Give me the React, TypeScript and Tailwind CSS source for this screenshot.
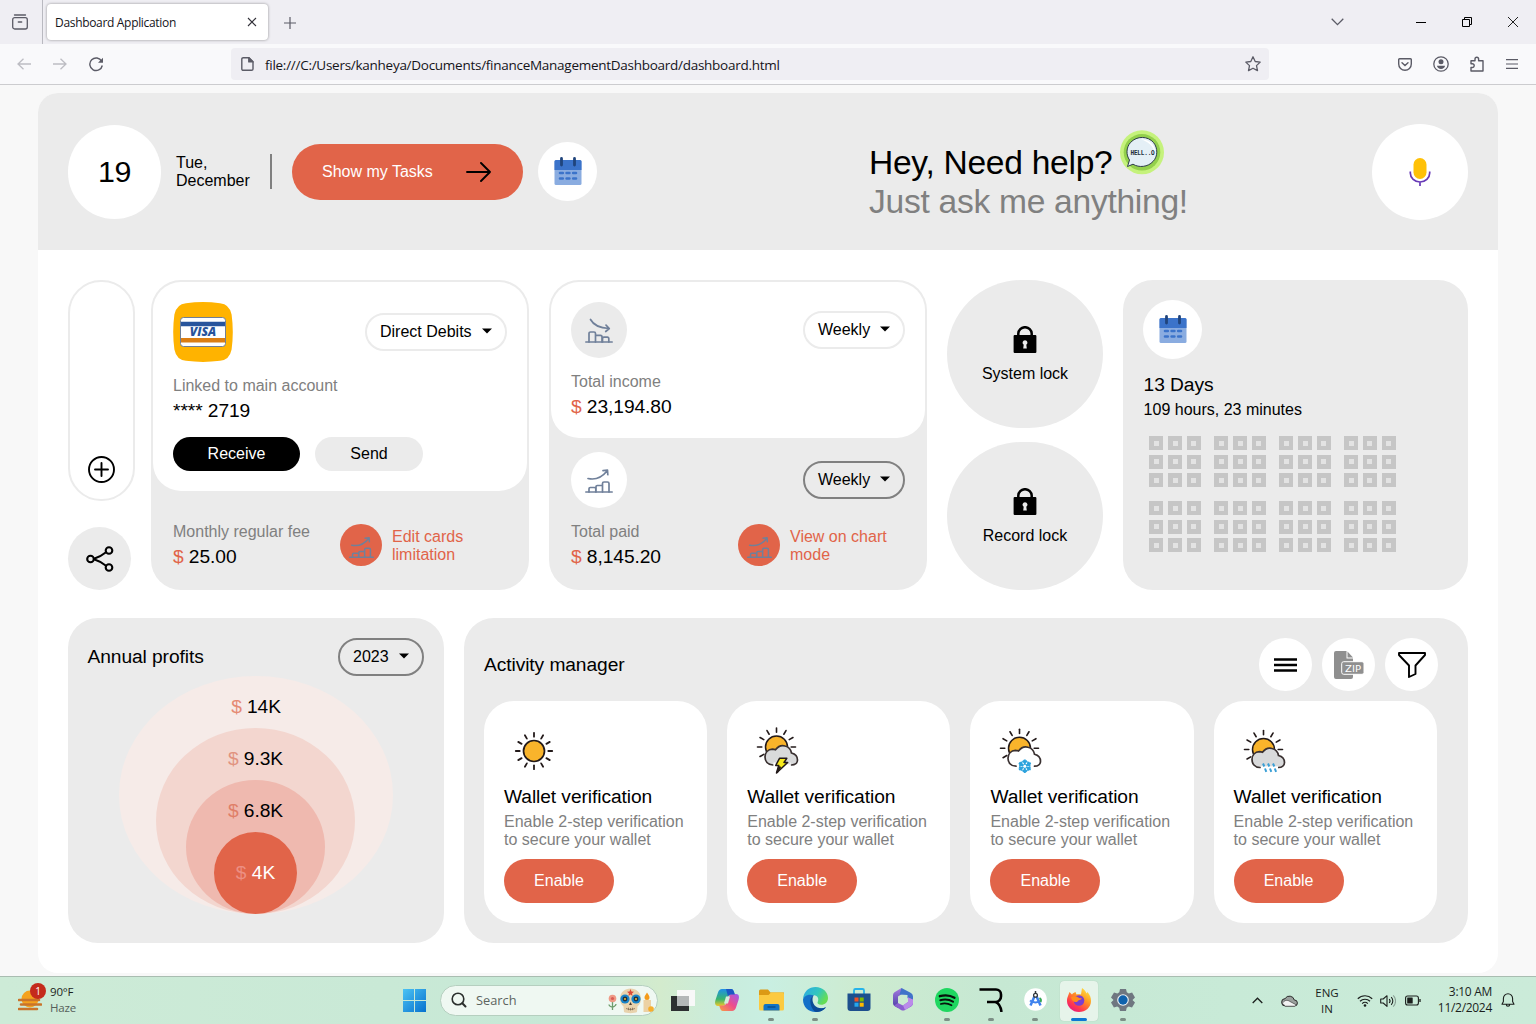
import React from "react";

const ui = "font-['Open_Sans','Noto_Sans',sans-serif]";

/* ---------- page icons ---------- */

function CalendarIcon() {
  return (
    <svg width="28" height="30" viewBox="0 0 28 30">
      <rect x="0.5" y="3" width="27" height="25" rx="1.5" fill="#8aace0" />
      <path d="M2 3h24a1.5 1.5 0 0 1 1.500 1.500V13H.5V4.500A1.500 1.500 0 0 1 2 3z" fill="#3b73ca" />
      <path d="M7.500 1.500v6.500M20.500 1.500v6.500" stroke="#20447c" strokeWidth="2.800" strokeLinecap="round" />
      <path d="M6 16h2.800M12.600 16h2.800M19.200 16H22M6 21.500h2.800M12.600 21.500h2.800M19.200 21.500H22" stroke="#3b73ca" strokeWidth="2.600" strokeLinecap="round" />
    </svg>
  );
}

function ChartIcon({ down = false, small = false }: { down?: boolean; small?: boolean }) {
  const s = small ? 25 : 28;
  return (
    <svg width={s} height={s} viewBox="0 0 28 28" fill="none" stroke="#70809a" strokeWidth="1.700" strokeLinecap="round" strokeLinejoin="round">
      <path d="M.8 26h26.400" />
      {down ? (
        <>
          <path d="M5.500 3.500c3 5.500 8.500 8.500 18.500 9M21 9.200l3.300 3.300-3.600 3" />
          <path d="M4 26V17.500a1.500 1.500 0 0 1 1.500-1.500h3.500a1.500 1.500 0 0 1 1.500 1.500V26M10.500 19.300h5a1.500 1.500 0 0 1 1.500 1.500V26M17.500 26v-3.500a1.300 1.300 0 0 1 1.300-1.300h3.700a1.300 1.300 0 0 1 1.300 1.300V26" />
        </>
      ) : (
        <>
          <path d="M3 12.500c7.500 1.700 14-1.200 19-7.500M18 4.700l4.500-.5.3 4.500" />
          <path d="M4 26v-3.200a1.300 1.300 0 0 1 1.300-1.300h4.200a1.300 1.300 0 0 1 1.300 1.300V26M11 21v-.2a1.300 1.300 0 0 1 1.300-1.300H17M11 21v5M17.500 26v-8.500a1.500 1.500 0 0 1 1.500-1.500h3.500a1.500 1.500 0 0 1 1.500 1.500V26" />
        </>
      )}
    </svg>
  );
}

function VisaIcon() {
  return (
    <svg width="60" height="60" viewBox="0 0 60 60">
      <path d="M13 1.200Q30-1 47 1.200 56.500 2 58.600 12.500 61 30 58.600 47.500 56.500 58 47 58.800 30 61 13 58.800 3.500 58 1.400 47.500-1 30 1.400 12.500 3.500 2 13 1.200z" fill="#ffb300" />
      <rect x="7.500" y="15.500" width="45" height="29" rx="3" fill="#fff" stroke="#6f7f96" strokeWidth="1" />
      <path d="M8 19.800h44v4.400H8z" fill="#27549c" />
      <path d="M8 36h44v4.400H8z" fill="#dc7e12" />
      <text x="30" y="34.300" textAnchor="middle" fontFamily="Open Sans" fontWeight="800" fontStyle="italic" fontSize="11.500" textLength="26.500" lengthAdjust="spacingAndGlyphs" fill="#27549c">VISA</text>
    </svg>
  );
}

function HelloIcon() {
  return (
    <svg width="44" height="45" viewBox="0 0 44 45">
      <circle cx="22" cy="22.300" r="22" fill="#c5f27c" />
      <circle cx="22" cy="22.300" r="18.300" fill="#93d04c" />
      <path d="M7.500 36.500l2-6.500C6 25 6 17.500 10.500 12.500 17 5.500 28 6 33.500 12.500 38 18 38 26.500 33 31.500 28 37 19 38 13 34.200z" fill="#e4eff6" stroke="#2c3b47" strokeWidth="1" />
      <path d="M21 9.200c8 0 14.500 5.500 14.200 13.500-2.500-7-7-11-14.200-13.500z" fill="#fff" />
      <text x="22.500" y="25" textAnchor="middle" fontFamily="Liberation Mono" fontWeight="700" fontSize="8" textLength="24" lengthAdjust="spacingAndGlyphs" fill="#22303c">HELL..O</text>
    </svg>
  );
}

function MicIcon() {
  return (
    <svg width="22" height="30" viewBox="0 0 22 30" fill="none">
      <rect x="4.500" y="1" width="13" height="21" rx="6.500" fill="#ffc107" />
      <path d="M1.300 14.500v1.500a9.700 9 0 0 0 19.400 0v-1.500M11 25v4" stroke="#673ab7" strokeWidth="1.700" />
    </svg>
  );
}

function LockIcon() {
  return (
    <svg width="24" height="27" viewBox="0 0 24 27">
      <path d="M5.300 11V7.500a6.700 6.300 0 0 1 13.400 0V11" fill="none" stroke="#000" strokeWidth="2.500" />
      <rect x=".6" y="9" width="22.800" height="18" rx="1" fill="#000" />
      <path d="M12 14.200a2.500 2.500 0 0 1 1.300 4.600l.5 3.700h-3.600l.5-3.700a2.500 2.500 0 0 1 1.300-4.600z" fill="#ebebeb" />
    </svg>
  );
}

const SUN_RAYS = [0, 30, 60, 90, 120, 150, 180, 210, 240, 270, 300, 330];

function SunIcon() {
  return (
    <svg width="60" height="60" viewBox="0 0 60 60">
      <circle cx="30" cy="30" r="10.500" fill="#f9b42b" stroke="#231a1a" strokeWidth="1.700" />
      {SUN_RAYS.map((a) => (
        <path key={a} d="M30 11.800v3.900" transform={`rotate(${a} 30 30)`} stroke="#231a1a" strokeWidth="1.800" strokeLinecap="round" />
      ))}
    </svg>
  );
}

function CloudSunIcon({ kind }: { kind: "storm" | "snow" | "rain" }) {
  const sunY = kind === "storm" ? 26 : kind === "snow" ? 27.200 : 28.500;
  const rays = [-120, -90, -60, -30, 0, 30, 60, 90];
  return (
    <svg width="60" height="60" viewBox="0 0 60 60" fill="none">
      <g transform={`translate(29.500 ${sunY})`}>
        <circle r="11" fill="#f9b42b" stroke="#231a1a" strokeWidth="1.500" />
        {rays.map((a) => (
          <path key={a} d="M0-19v4.300" transform={`rotate(${a})`} stroke="#231a1a" strokeWidth="1.600" strokeLinecap="round" />
        ))}
        <path d="M-3.500 18C-9 18-11.500 14-11.500 10c0-4.500 3-7.500 7.500-7.800 1 0 2 .2 3 .6C1.500-.5 5-2 8.500-1c4 1 6 4 6.500 7 4 1 6 4 6 7 0 3-2.500 5-6 5z" fill={kind === "snow" ? "#fff" : "#d9dadb"} />
        <path d="M-3.500 18C-9 18-11.500 14-11.500 10c0-4.500 3-7.500 7.500-7.800 1 0 2 .2 3 .6C1.500-.5 5-2 8.500-1c4 1 6 4 6.500 7 4 1 6 4 6 7 0 3-2.500 5-6 5" stroke="#3a3131" strokeWidth="1.700" strokeLinecap="round" />
        {kind === "storm" && (
          <>
            <path d="M-3 15.500h17v5H-3z" fill="#fff" />
            <path d="M-1 15.500h14.500v1.800H-1z" fill="#d9dadb" />
            <path d="M3 11.300h7.300l-2.800 4.200h3.700L0 26l2.200-7.500H-.8z" fill="#f7ea1d" stroke="#231a1a" strokeWidth="1.500" strokeLinejoin="round" />
            <path d="M3.800 19.500L.300 25.800" stroke="#231a1a" strokeWidth="2" />
          </>
        )}
        {kind === "snow" && (
          <g transform="translate(5.300 18)" stroke="#2ea3dd" strokeWidth="2">
            <circle r="7.500" fill="#fff" stroke="none" />
            {[0, 60, 120].map((a) => (
              <path key={a} d="M0-6.800V6.800M-2.200-5.300L0-3.600 2.200-5.300M-2.200 5.300L0 3.600 2.200 5.300" transform={`rotate(${a})`} />
            ))}
            <circle r="1.500" fill="#fff" stroke="none" />
          </g>
        )}
        {kind === "rain" && (
          <>
            <path d="M-2.500 16.800h17v4.500h-17z" fill="#fff" />
            <path d="M-.5 14l1.300 3M4.500 14l1.300 3M9.500 14l1.300 3M1.500 19l1.300 3.300M6.500 19l1.300 3.300M11.300 19l1.300 3.300" stroke="#3a9fd6" strokeWidth="2" />
          </>
        )}
      </g>
    </svg>
  );
}

function ZipIcon() {
  return (
    <svg width="32" height="30" viewBox="0 0 32 30">
      <path d="M3 1h10.500v7.500H20V27a2 2 0 0 1-2 2H3a2 2 0 0 1-2-2V3a2 2 0 0 1 2-2z" fill="#8f8f8f" />
      <path d="M14.500 1.500L20 7.500h-5.500z" fill="#8f8f8f" />
      <rect x="8.700" y="11.700" width="22.300" height="12.600" rx="2" fill="#8f8f8f" stroke="#fff" strokeWidth="1" />
      <text x="20" y="21.500" textAnchor="middle" fontFamily="DejaVu Sans" fontWeight="400" fontSize="9.500" textLength="16" lengthAdjust="spacingAndGlyphs" fill="#fff">ZIP</text>
    </svg>
  );
}

/* ---------- page building blocks ---------- */

function Select({ label, className }: { label: string; className: string }) {
  return (
    <div className={`flex h-[38px] items-center justify-between rounded-[19px] border-2 pr-[13px] pl-[13px] leading-[18px] ${className}`}>
      <span>{label}</span>
      <svg width="10" height="6" viewBox="0 0 10 6" className="-mt-0.5">
        <path d="M0 .5h10L5 5.500z" />
      </svg>
    </div>
  );
}

function Amount({ value }: { value: string }) {
  return (
    <p className="mt-[5px] text-[19.2px] leading-[22px] tracking-[-0.08px]">
      <span className="text-[#e16449]">$</span> {value}
    </p>
  );
}

function ActionLink({ lines }: { lines: string[] }) {
  return (
    <div className="mt-px flex items-center gap-2.5 text-[#e16449]">
      <div className="flex h-[42px] w-[42px] items-center justify-center rounded-full bg-[#e16449] pt-0.5">
        <ChartIcon small />
      </div>
      <p className="pt-0.5 leading-[18px]">
        {lines[0]}
        <br />
        {lines[1]}
      </p>
    </div>
  );
}

function DotBlock() {
  return (
    <div className="grid grid-cols-[repeat(3,14px)] gap-[4.7px]">
      {Array.from({ length: 9 }, (_, i) => (
        <div key={i} className="flex h-3.5 items-center justify-center bg-[#c6c6c6]">
          <div className="h-[5px] w-[5px] bg-[#e3e3e3]" />
        </div>
      ))}
    </div>
  );
}

function Lock({ label }: { label: string }) {
  return (
    <div className="flex h-[148px] flex-col items-center rounded-[74px] bg-[#ebebeb] pt-[46px]">
      <LockIcon />
      <p className="mt-3 leading-[18px]">{label}</p>
    </div>
  );
}

function RoundButton({ children }: { children: React.ReactNode }) {
  return <div className="flex h-[53px] w-[53px] items-center justify-center rounded-full bg-white">{children}</div>;
}

function WalletCard({ icon }: { icon: React.ReactNode }) {
  return (
    <div className="h-[222px] flex-1 rounded-[30px] bg-white px-5 pt-5">
      {icon}
      <h3 className="mt-[5px] text-[19.2px] leading-[22px] tracking-[-0.08px]">Wallet verification</h3>
      <p className="mt-[5px] leading-[18px] whitespace-nowrap text-[#808080]">
        Enable 2-step verification
        <br />
        to secure your wallet
      </p>
      <button className="mt-2.5 block h-11 w-[110px] rounded-[22px] bg-[#e16449] text-white">Enable</button>
    </div>
  );
}

/* ---------- browser chrome ---------- */

function BrowserChrome() {
  return (
    <div className={ui}>
      <div className="flex h-11 items-center bg-[#efeef3]">
        <div className="flex h-11 w-[43px] items-center border-r border-[#b9b9c0] pl-3">
          <svg width="16" height="16" viewBox="0 0 16 16" fill="none" stroke="#5b5b66" strokeWidth="1.300" strokeLinecap="round">
            <path d="M2.500 1h11" />
            <rect x=".7" y="3.700" width="14.600" height="11.300" rx="2" />
            <path d="M6.300 8h3.400" />
          </svg>
        </div>
        <div className="ml-[4px] flex h-9 w-[221px] items-center justify-between rounded bg-white pr-[11px] pl-2 shadow-[0_0_3px_rgba(0,0,0,0.4)]">
          <span className="pt-0.5 text-[12px] tracking-[-0.32px] text-[#15141a]">Dashboard Application</span>
          <svg width="10" height="10" viewBox="0 0 10 10" stroke="#33323a" strokeWidth="1.100">
            <path d="M1 1l8 8M9 1L1 9" />
          </svg>
        </div>
        <svg className="mt-0.5 ml-4" width="12" height="12" viewBox="0 0 12 12" stroke="#5b5b66" strokeWidth="1.200">
          <path d="M6 0v12M0 6h12" />
        </svg>
        <svg className="ml-auto" width="13" height="8" viewBox="0 0 13 8" fill="none" stroke="#5b5b66" strokeWidth="1.300">
          <path d="M.7.800l5.800 5.800L12.300.800" />
        </svg>
        <div className="ml-[72px] h-px w-2.5 bg-black" />
        <svg className="ml-9" width="10" height="10" viewBox="0 0 10 10" fill="none" stroke="#000">
          <path d="M.5 2.500h7v7h-7zM2.500 2.500v-2h7v7h-2" />
        </svg>
        <svg className="mr-[18px] ml-9" width="10" height="10" viewBox="0 0 10 10" stroke="#222" strokeWidth="1">
          <path d="M0 0l10 10M10 0L0 10" />
        </svg>
      </div>
      <div className="flex h-[41px] items-center border-b border-[#cccccf] bg-[#f9f9fb]">
        <svg className="ml-[17px]" width="14" height="12" viewBox="0 0 14 12" fill="none" stroke="#bdbdc3" strokeWidth="1.300">
          <path d="M14 6H1M6.500.7L1 6l5.500 5.300" />
        </svg>
        <svg className="ml-[22px]" width="14" height="12" viewBox="0 0 14 12" fill="none" stroke="#bdbdc3" strokeWidth="1.300">
          <path d="M0 6h13M7.500.7L13 6l-5.500 5.300" />
        </svg>
        <svg className="ml-[22px]" width="15" height="15" viewBox="0 0 15 15" fill="none" stroke="#5b5b66" strokeWidth="1.400">
          <path d="M12.700 4.300A6.300 6.300 0 1 0 13.300 8.500" />
          <path d="M14 .8v5H9z" fill="#5b5b66" stroke="none" />
        </svg>
        <div className="ml-[127px] flex h-8 w-[1038px] items-center rounded bg-[#efeef3] pr-2 pl-2.5">
          <svg width="13" height="14" viewBox="0 0 13 14" fill="none" stroke="#5b5b66" strokeWidth="1.400" strokeLinejoin="round">
            <path d="M2.200.7h5.800l4 4v7.200a1.400 1.400 0 0 1-1.400 1.400H2.200A1.400 1.400 0 0 1 .8 11.900V2.100A1.400 1.400 0 0 1 2.200.7z" />
            <path d="M7.800.7v4.200h4.200z" fill="#5b5b66" />
          </svg>
          <span className="ml-[11px] pt-0.5 text-[13.5px] tracking-[-0.27px] whitespace-nowrap text-[#15141a]">
            file:///C:/Users/kanheya/Documents/financeManagementDashboard/dashboard.html
          </span>
          <svg className="ml-auto" width="16" height="16" viewBox="0 0 16 16" fill="none" stroke="#5b5b66" strokeWidth="1.300" strokeLinejoin="round">
            <path d="M8 .8l2.200 4.700 5 .6-3.700 3.500 1 5L8 12.200l-4.500 2.400 1-5L.8 6.100l5-.6z" />
          </svg>
        </div>
        <div className="mr-[18px] ml-auto flex items-center gap-[21px]">
          <svg width="14" height="13" viewBox="0 0 14 13" fill="none" stroke="#5b5b66" strokeWidth="1.400" strokeLinecap="round">
            <path d="M1.500.7h11a.8.800 0 0 1 .8.800V6A6.300 6.300 0 0 1 .7 6V1.500a.8.800 0 0 1 .8-.8zM4 4.700l3 2.800 3-2.800" />
          </svg>
          <svg width="16" height="16" viewBox="0 0 16 16">
            <circle cx="8" cy="8" r="7.200" fill="none" stroke="#5b5b66" strokeWidth="1.300" />
            <circle cx="8" cy="5.800" r="2.500" fill="#5b5b66" />
            <path d="M4 9.800h8c0 2-2 3.200-4 3.200s-4-1.200-4-3.200z" fill="#5b5b66" />
          </svg>
          <svg width="15" height="16" viewBox="0 0 15 16" fill="none" stroke="#5b5b66" strokeWidth="1.400" strokeLinejoin="round">
            <path d="M1 15v-3.500h1.300a1.900 1.900 0 1 0 0-3.800H1V4.800h4V3a1.800 1.800 0 0 1 3.600 0v1.800H13V15z" />
          </svg>
          <svg width="12" height="10" viewBox="0 0 12 10" stroke="#5b5b66" strokeWidth="1.200">
            <path d="M0 .7h12M0 5h12M0 9.300h12" />
          </svg>
        </div>
      </div>
    </div>
  );
}

/* ---------- taskbar ---------- */

function TaskSlot({ children, running = false, active = false }: { children: React.ReactNode; running?: boolean; active?: boolean }) {
  return (
    <div className="flex w-11 justify-center">
      <div className={`flex h-10 w-[38px] flex-col items-center justify-between rounded pt-[7px] ${active ? "bg-[#e6f4ea] shadow-[0_0_1px_rgba(0,0,0,0.2)]" : ""}`}>
        <div className="flex h-6 items-center">{children}</div>
        <div className={`h-[3px] rounded-full ${active ? "w-4 bg-[#0b78d4]" : running ? "w-1.5 bg-[#7d8f86]" : "w-1.5"}`} />
      </div>
    </div>
  );
}

function Taskbar() {
  return (
    <div className={`${ui} flex h-12 items-center border-t border-[#a9bdb1] bg-[linear-gradient(90deg,#cdebd7_0%,#c9e9d6_25%,#c6e8d6_38%,#d3ebcd_43%,#c9ecdc_47%,#c9efe2_50%,#cdebd0_56%,#c6e8d3_65%,#c8ead7_80%,#cbebd9_100%)] text-[#1b1f1d]`}>
      <div className="relative ml-[18px] flex w-[370px] items-center">
        <svg width="24" height="22" viewBox="0 0 24 22">
          <circle cx="12" cy="9" r="8.500" fill="#f4a21e" />
          <path d="M1 10h20M3 14.500h20M1 19h18" stroke="#c9742a" strokeWidth="2.600" strokeLinecap="round" />
        </svg>
        <div className="absolute top-[-3px] left-[12px] flex h-4 w-4 items-center justify-center rounded-full bg-[#c42b1c] text-[10px] leading-none text-white">1</div>
        <div className="-mt-0.5 ml-2 text-[11.5px] leading-4 tracking-[-0.2px]">
          <p>90°F</p>
          <p className="text-[#55605a]">Haze</p>
        </div>
      </div>
      <div className="ml-[15px]">
        <svg width="23" height="23" viewBox="0 0 23 23">
          <defs>
            <linearGradient id="win" x1="0" y1="0" x2="1" y2="1">
              <stop offset="0" stopColor="#4cc3f4" />
              <stop offset="1" stopColor="#0671ce" />
            </linearGradient>
          </defs>
          <path d="M0 0h11v11H0zM12 0h11v11H12zM0 12h11v11H0zM12 12h11v11H12z" fill="url(#win)" />
        </svg>
      </div>
      <div className="ml-3.5 flex h-[31px] w-[218px] items-center rounded-full border border-[#b5cfbf] bg-[#eff8f2] pl-2.5">
        <svg className="-mt-0.5" width="16" height="16" viewBox="0 0 16 16" fill="none" stroke="#2b2f2d" strokeWidth="1.600" strokeLinecap="round">
          <circle cx="7" cy="7" r="5.800" />
          <path d="M11.300 11.300L14.500 14.500" strokeWidth="2" />
        </svg>
        <span className="ml-[9px] pt-px text-[12.8px] text-[#5c6460]">Search</span>
        <svg className="mr-[3px] ml-auto" width="46" height="26" viewBox="0 0 46 26">
          <path d="M4.500 13v9M1 16.500c0 2 3 2.500 3.500 2.500S8 18 8 16" stroke="#6c9c6c" strokeWidth="1.300" fill="none" />
          <circle cx="4.500" cy="10.500" r="3.800" fill="#ef9a86" />
          <circle cx="4.500" cy="10.500" r="1.600" fill="#d95d55" />
          <path d="M12 11C12 4 17 .5 22.500.5S33 4 33 11c0 4-2 6-3.500 7.500L29 24c-2 1.500-11 1.500-13 0l-.5-5.500C14 17 12 15 12 11z" fill="#e8d3ad" />
          <circle cx="17" cy="11" r="4.600" fill="#1785c9" />
          <circle cx="28" cy="11" r="4.600" fill="#1785c9" />
          <circle cx="17" cy="11" r="2.400" fill="#25303b" />
          <circle cx="28" cy="11" r="2.400" fill="#25303b" />
          <circle cx="17" cy="11" r="1" fill="#f2c230" />
          <circle cx="28" cy="11" r="1" fill="#f2c230" />
          <path d="M22.500 1l1 2.500 2.500.2-2 1.700.6 2.600-2.100-1.400L20.400 8l.6-2.600-2-1.700 2.500-.2z" fill="#dc4a38" />
          <path d="M22.500 14l1.500 3h-3z" fill="#4a3b31" />
          <path d="M18 20.500c3 1.300 6 1.300 9 0M20.500 19.700v2.500M22.500 20v2.500M24.500 19.700v2.500" stroke="#7a634b" fill="none" strokeWidth=".7" />
          <path d="M35.500 12h7.500v12h-7.500z" fill="#ecd1a4" />
          <path d="M39 4.500c1.800 2.500 2.500 3.500 2.500 5a2.500 2.500 0 0 1-5 0c0-1.500 1.300-3 2.500-5z" fill="#f49b1b" />
          <circle cx="43" cy="21" r="2.800" fill="#f6ae2c" />
        </svg>
      </div>
      <div className="ml-[3px] flex">
        <TaskSlot>
          <svg width="24" height="24" viewBox="0 0 24 24">
            <path d="M6 2h18v16H6z" fill="#f8f8f8" />
            <path d="M0 8h18v15H0z" fill="#2d2f31" />
            <path d="M6 8h12v10H6z" fill="#b4b7b8" />
          </svg>
        </TaskSlot>
        <TaskSlot>
          <svg width="24" height="22" viewBox="0 0 24 22">
            <defs>
              <linearGradient id="cp1" x1="0" y1="0" x2="0" y2="1">
                <stop offset="0" stopColor="#1f8fe8" />
                <stop offset=".6" stopColor="#38b56d" />
                <stop offset="1" stopColor="#f0c72a" />
              </linearGradient>
              <linearGradient id="cp2" x1="1" y1="0" x2="0" y2="1">
                <stop offset="0" stopColor="#9a5cf0" />
                <stop offset=".5" stopColor="#ee4d8b" />
                <stop offset="1" stopColor="#f9a03f" />
              </linearGradient>
            </defs>
            <path d="M7 0h9c2 0 2.500 1.500 3 3l.8 2.500H16c-2 0-3 1-3.500 3L10.500 14c-.7 2.300-1.500 3-3.500 3H3c-3 0-3.500-2.500-2.500-6L3 3.500C3.700 1.300 5 0 7 0z" fill="url(#cp1)" />
            <path d="M17 22H8c-2 0-2.500-1.500-3-3l-.8-2.500H8c2 0 3-1 3.500-3L13.500 8c.7-2.300 1.500-3 3.500-3h4c3 0 3.500 2.500 2.500 6L21 18.500c-.7 2.200-2 3.500-4 3.500z" fill="url(#cp2)" />
            <path d="M11 7.500h4L13 14.500H9z" fill="#d4edda" />
            <path d="M11 0h5c2 0 2.500 1.500 3 3l.8 2.500H16c-1.500 0-2.500.7-3 2z" fill="#1c57c4" />
          </svg>
        </TaskSlot>
        <TaskSlot running>
          <svg width="25" height="22" viewBox="0 0 25 22">
            <path d="M0 2A1.500 1.500 0 0 1 1.500.5H9l2.500 3H25V10H0z" fill="#dc9a15" />
            <path d="M0 6h9.500l2.500-2.500h11.500A1.500 1.500 0 0 1 25 5v15a1.500 1.500 0 0 1-1.500 1.500h-22A1.500 1.500 0 0 1 0 20z" fill="#fcca40" />
            <path d="M4.500 21.500V17A2 2 0 0 1 6.500 15h12a2 2 0 0 1 2 2v4.500z" fill="#1273c5" />
            <path d="M8.500 18h8" stroke="#0a4d8c" strokeWidth="1.400" />
          </svg>
        </TaskSlot>
        <TaskSlot running>
          <svg width="25" height="25" viewBox="0 0 24 24">
            <defs>
              <linearGradient id="ed1" x1="0" y1="0" x2="1" y2=".5">
                <stop offset="0" stopColor="#2aa7e8" />
                <stop offset=".6" stopColor="#32c6bd" />
                <stop offset="1" stopColor="#66dd55" />
              </linearGradient>
            </defs>
            <path d="M0 12C.5 4 6 0 12 0c7 0 12 5 12 10.500 0 4-3 6.500-6.500 6.500-3 0-4-1.300-3.500-2.300C15 13 15.500 9 11 8 6 7 1 9 0 12z" fill="url(#ed1)" />
            <path d="M0 12C1 8 6 6.300 10.500 8 7 10 7 15 10 18c3 3.200 8 3.500 12 1.500C19 23 16 24 12 24 5 24 0 19 0 12z" fill="#1370c8" />
            <path d="M10.500 8C6 9.500 5.500 18 11.500 23.800 17 24.500 21 21.500 22 19.500c-4 1.700-8.500 1-11-2C8.500 14 8.700 10 10.500 8z" fill="#0b4a96" />
          </svg>
        </TaskSlot>
        <TaskSlot>
          <svg width="24" height="24" viewBox="0 0 24 24">
            <path d="M7 6V2.500A1.500 1.500 0 0 1 8.500 1h7A1.500 1.500 0 0 1 17 2.500V6" fill="none" stroke="#25b3ea" strokeWidth="1.800" />
            <path d="M.5 5.500h23V20a3 3 0 0 1-3 3h-17a3 3 0 0 1-3-3z" fill="#1d4f8d" />
            <path d="M7.500 9.500h4v4h-4z" fill="#f25022" />
            <path d="M12.700 9.500h4v4h-4z" fill="#7fba00" />
            <path d="M7.500 14.700h4v4h-4z" fill="#25a6ee" />
            <path d="M12.700 14.700h4v4h-4z" fill="#ffb900" />
          </svg>
        </TaskSlot>
        <TaskSlot>
          <svg width="22" height="23" viewBox="0 0 22 23">
            <defs>
              <linearGradient id="m1" x1="0" y1="0" x2="0" y2="1">
                <stop offset="0" stopColor="#a67be0" />
                <stop offset="1" stopColor="#4a3fa5" />
              </linearGradient>
            </defs>
            <path d="M9.500 0L2.500 4.200A3.500 3.500 0 0 0 1 7v8.500A3.500 3.500 0 0 0 2.500 18L6 20V8.500L13 4z" fill="url(#m1)" />
            <path d="M9.500 0L19 5a4 4 0 0 1 2 3.500V14l-5.500-4V7L7.500 6.500z" fill="#4173c9" />
            <path d="M2 17.500L6 15l5 2.500L16 14V9l5 3v3.500a3.500 3.500 0 0 1-1.500 2.800L13 22a4 4 0 0 1-4 0z" fill="#8b5fd0" />
            <path d="M11 17.500L16 14V9.500l5 2V15a3.500 3.500 0 0 1-1.500 2.800L13 22z" fill="#bb8bea" />
          </svg>
        </TaskSlot>
        <TaskSlot running>
          <svg width="24" height="24" viewBox="0 0 24 24" fill="none" stroke="#08120c" strokeLinecap="round">
            <circle cx="12" cy="12" r="12" fill="#1fd760" stroke="none" />
            <path d="M4.800 8.200c5-1.400 10.500-.9 14.700 1.500" strokeWidth="2.300" />
            <path d="M5.300 12.300c4.300-1.200 9-.7 12.700 1.400" strokeWidth="2" />
            <path d="M5.800 16c3.700-1 7.500-.5 10.700 1.300" strokeWidth="1.700" />
          </svg>
        </TaskSlot>
        <TaskSlot running>
          <svg width="24" height="24" viewBox="0 0 24 24" fill="none" stroke="#000" strokeWidth="2.600" strokeLinejoin="round">
            <path d="M.5 1.500h16.500a5 5 0 0 1 5 5v2a5.500 5.500 0 0 1-5.500 5.500H8M16.500 14c3 1 5 3 6 10" />
          </svg>
        </TaskSlot>
        <TaskSlot running>
          <svg width="23" height="23" viewBox="0 0 23 23">
            <circle cx="11.500" cy="11.500" r="11.300" fill="#fff" />
            <path d="M11.500 6L6.500 17.500M11.500 6l5 11.500" stroke="#3f82ee" strokeWidth="2.500" fill="none" />
            <path d="M6 12.500c3 2.500 8 2.500 11 0" stroke="#3f82ee" strokeWidth="2" fill="none" />
            <path d="M15.500 10a3 3 0 0 1 1 4" stroke="#35a853" strokeWidth="1.800" fill="none" />
            <circle cx="11.500" cy="7.300" r="1.900" fill="#fff" stroke="#33383c" strokeWidth="1.300" />
            <path d="M11.500 3v2.500" stroke="#33383c" strokeWidth="1.500" />
          </svg>
        </TaskSlot>
        <TaskSlot active>
          <svg width="24" height="24" viewBox="0 0 24 24">
            <defs>
              <linearGradient id="ff" x1=".9" y1="0" x2=".2" y2="1">
                <stop offset="0" stopColor="#fff04a" />
                <stop offset=".4" stopColor="#ff9a20" />
                <stop offset=".75" stopColor="#ff3a4d" />
                <stop offset="1" stopColor="#e31587" />
              </linearGradient>
            </defs>
            <path d="M1 8l1.500-4L5 6.500C6 5 7 4.500 8.500 4l1 2.500c2-.5 3-.5 4.500 0L15 0c3 2 4 4 4.500 5.500L20.500 4C23 7 24 9.500 24 13c0 6.500-5.500 11-12 11S0 19 0 13c0-2 .3-3.500 1-5z" fill="url(#ff)" />
            <circle cx="12" cy="12.500" r="5.300" fill="#7a3fd0" />
            <path d="M4 9c3-1.500 6-1 8 1l3 .5c-1 1.500-4 1.500-4.500 3-2 1.500-6 0-6.500-4.500z" fill="#ff8b1c" />
          </svg>
        </TaskSlot>
        <TaskSlot running>
          <svg width="24" height="24" viewBox="0 0 24 24">
            <path d="M9 1h6l.8 3.300 2 1.200 3.300-1L24 9.500l-2.500 2.500 2.500 2.500-3 5-3.300-1-2 1.200L15 23H9l-.8-3.300-2-1.200-3.300 1-2.900-5L2.500 12 0 9.500l3-5 3.300 1 2-1.200z" fill="#6f7780" />
            <circle cx="12" cy="12" r="5.800" fill="#eef3f6" />
            <circle cx="12" cy="12" r="4.700" fill="#0f62ac" />
          </svg>
        </TaskSlot>
      </div>
      <div className="mr-[21px] ml-auto flex items-center">
        <svg width="11" height="7" viewBox="0 0 11 7" fill="none" stroke="#1b1f1d" strokeWidth="1.300">
          <path d="M.7 6l4.800-4.800L10.300 6" />
        </svg>
        <svg className="ml-[18px]" width="17" height="12" viewBox="0 0 17 12">
          <path d="M4.500 11a3.700 3.700 0 0 1-.4-7.400A5 5 0 0 1 13.300 5 3 3 0 0 1 13.500 11z" fill="#9aa09d" stroke="#2b2b2b" />
          <path d="M1.500 8.500C3 5 6.500 4.500 9 6.500l6.500 3.500-2 1.200h-9z" fill="#f2f2f2" stroke="#2b2b2b" strokeWidth=".6" />
        </svg>
        <div className="ml-[15px] w-7 text-center text-[11.5px] leading-4">
          <p>ENG</p>
          <p>IN</p>
        </div>
        <svg className="ml-4" width="16" height="13" viewBox="0 0 16 13" fill="none" stroke="#1b1f1d" strokeWidth="1.200">
          <path d="M.8 4.700a10.300 10.300 0 0 1 14.400 0M3 7.300a7.100 7.100 0 0 1 10 0M5.200 9.600a4 4 0 0 1 5.600 0" />
          <circle cx="8" cy="11.500" r="1.300" fill="#1b1f1d" stroke="none" />
        </svg>
        <svg className="ml-[7px]" width="16" height="14" viewBox="0 0 16 14" fill="none" stroke="#1b1f1d" strokeWidth="1.100" strokeLinejoin="round">
          <path d="M.7 5v4h2.500l3.800 3.300V1.700L3.200 5zM9.200 5a3 3 0 0 1 0 4M11.200 3.200a5.300 5.300 0 0 1 0 7.600" />
          <path d="M13.200 1.300a8 8 0 0 1 0 11.400" stroke="#8aa095" />
        </svg>
        <svg className="ml-[9px]" width="16" height="11" viewBox="0 0 16 11">
          <rect x=".6" y="1" width="12.800" height="9" rx="2" fill="none" stroke="#1b1f1d" strokeWidth="1.100" />
          <rect x="2.200" y="2.600" width="5.500" height="5.800" rx=".5" fill="#1b1f1d" />
          <path d="M15 4v3" stroke="#1b1f1d" strokeWidth="1.300" />
        </svg>
        <div className="-mt-0.5 ml-[14px] w-[57px] text-right text-[12px] leading-4 tracking-[-0.3px] whitespace-nowrap">
          <p>3:10 AM</p>
          <p>11/2/2024</p>
        </div>
        <svg className="ml-[9px]" width="14" height="15" viewBox="0 0 14 15" fill="none" stroke="#1b1f1d" strokeWidth="1.100" strokeLinejoin="round">
          <path d="M7 .8a4.600 4.600 0 0 1 4.600 4.600v3l1.400 2.800H1l1.400-2.800v-3A4.600 4.600 0 0 1 7 .8zM5.300 11.500a1.700 1.700 0 0 0 3.400 0" />
        </svg>
      </div>
    </div>
  );
}

/* ---------- dashboard ---------- */

function Header() {
  return (
    <header className="flex h-[157px] items-center rounded-t-[20px] bg-[#ebebeb] px-[30px]">
      <div className="flex h-[94px] w-[93px] items-center justify-center rounded-full bg-white text-[30.4px] tracking-[-0.4px]">19</div>
      <p className="ml-[15px] w-[94px] leading-[18px]">
        Tue,
        <br />
        December
      </p>
      <div className="h-[35px] w-0.5 bg-[#808080]" />
      <button className="ml-5 flex h-14 w-[231px] items-center justify-between rounded-[28px] bg-[#e16449] pr-8 pl-[30px] text-white">
        <span>Show my Tasks</span>
        <svg width="25" height="20" viewBox="0 0 25 20" fill="none" stroke="#000" strokeWidth="1.900" strokeLinecap="round" strokeLinejoin="round">
          <path d="M1 10h23M15 1l9 9-9 9" />
        </svg>
      </button>
      <div className="ml-[15px] flex h-[59px] w-[59px] items-center justify-center rounded-full bg-white">
        <CalendarIcon />
      </div>
      <div className="ml-[272px] pt-2.5 text-[33.6px] leading-[39px] tracking-[-0.28px]">
        <div className="flex h-[50px] items-end gap-2">
          <span>Hey, Need help?</span>
          <div className="mb-[7px]">
            <HelloIcon />
          </div>
        </div>
        <p className="text-[#808080]">Just ask me anything!</p>
      </div>
      <div className="ml-auto flex h-24 w-24 items-center justify-center rounded-full bg-white">
        <MicIcon />
      </div>
    </header>
  );
}

function AccountCard() {
  return (
    <section className="flex h-[310px] w-[378px] flex-col rounded-[30px] bg-[#ebebeb] p-0.5">
      <div className="h-[209px] rounded-[28px] bg-white px-5 pt-5">
        <div className="flex items-start justify-between">
          <VisaIcon />
          <Select label="Direct Debits" className="mt-[11px] w-[142px] border-[#ebebeb] bg-white" />
        </div>
        <p className="mt-[15px] leading-[18px] text-[#808080]">Linked to main account</p>
        <p className="mt-[5px] text-[19.2px] leading-[22px] tracking-[-0.08px]">**** 2719</p>
        <div className="mt-[15px] flex gap-[15px]">
          <button className="h-[34px] w-[127px] rounded-[17px] bg-black text-white">Receive</button>
          <button className="h-[34px] w-[108px] rounded-[17px] bg-[#ebebeb]">Send</button>
        </div>
      </div>
      <div className="flex items-start pt-8 pl-5">
        <div className="w-[167px]">
          <p className="leading-[18px] text-[#808080]">Monthly regular fee</p>
          <Amount value="25.00" />
        </div>
        <ActionLink lines={["Edit cards", "limitation"]} />
      </div>
    </section>
  );
}

function IncomeCard() {
  return (
    <section className="h-[310px] w-[378px] rounded-[30px] bg-[#ebebeb] p-0.5">
      <div className="h-[156px] rounded-[28px] bg-white px-5 pt-5">
        <div className="flex items-center justify-between">
          <div className="flex h-14 w-14 items-center justify-center rounded-full bg-[#ebebeb]">
            <ChartIcon down />
          </div>
          <Select label="Weekly" className="w-[102px] border-[#ebebeb] bg-white" />
        </div>
        <p className="mt-[15px] leading-[18px] text-[#808080]">Total income</p>
        <Amount value="23,194.80" />
      </div>
      <div className="px-5 pt-3.5">
        <div className="flex items-center justify-between">
          <div className="flex h-14 w-14 items-center justify-center rounded-full bg-white">
            <ChartIcon />
          </div>
          <Select label="Weekly" className="w-[102px] border-[#808080]" />
        </div>
        <div className="mt-[15px] flex items-start">
          <div className="w-[167px]">
            <p className="leading-[18px] text-[#808080]">Total paid</p>
            <Amount value="8,145.20" />
          </div>
          <ActionLink lines={["View on chart", "mode"]} />
        </div>
      </div>
    </section>
  );
}

function ProfitCard() {
  const label = "pt-[19.5px] h-[52px] text-[19.2px] leading-[22px] tracking-[-0.08px] text-center";
  return (
    <section className="flex h-[325px] w-[376px] flex-col items-center rounded-[30px] bg-[#ebebeb] pt-5">
      <div className="flex w-full items-center justify-between pr-5 pl-[19.5px]">
        <h2 className="text-[19.2px] leading-[22px] tracking-[-0.08px]">Annual profits</h2>
        <Select label="2023" className="w-[86px] border-[#808080]" />
      </div>
      <div className="flex h-[238px] w-[274px] flex-col items-center rounded-[50%] bg-[#f6ebe8]">
        <p className={label}>
          <span className="text-[#e58a74]">$</span> 14K
        </p>
        <div className="mr-px flex h-[186px] w-[199px] flex-col items-center rounded-[50%] bg-[#f3d6cf]">
          <p className={label}>
            <span className="text-[#e1937f]">$</span> 9.3K
          </p>
          <div className="flex h-[134px] w-[139px] flex-col items-center rounded-[50%] bg-[#efb9af]">
            <p className={label}>
              <span className="text-[#e07f68]">$</span> 6.8K
            </p>
            <div className="flex h-[82px] w-[83px] items-center justify-center rounded-[50%] bg-[#e16449] text-[19.2px] whitespace-pre text-white">
              <span className="text-[#ec8f83]">$ </span>4K
            </div>
          </div>
        </div>
      </div>
    </section>
  );
}

export default function App() {
  return (
    <div className="flex h-[1024px] w-[1536px] flex-col overflow-hidden bg-[#f8f8f8]">
      <BrowserChrome />
      <main className="mx-[38px] mt-2 h-[880px] rounded-[20px] bg-white font-['Liberation_Sans',Arial,sans-serif] text-base text-black">
        <Header />
        <div className="flex gap-5 px-[30px] pt-[30px]">
          <div className="-mr-1 flex w-[67px] flex-col justify-between">
            <div className="flex h-[221px] items-end justify-center rounded-[33px] border-2 border-[#ebebeb] pb-4">
              <svg width="27" height="27" viewBox="0 0 27 27" fill="none" stroke="#000" strokeWidth="1.900" strokeLinecap="round">
                <circle cx="13.500" cy="13.500" r="12.500" />
                <path d="M13.500 7v13M7 13.500h13" />
              </svg>
            </div>
            <div className="flex h-[63px] w-[63px] items-center justify-center rounded-full bg-[#ebebeb]">
              <svg width="28" height="26" viewBox="0 0 28 26" fill="none" stroke="#000" strokeWidth="2.100">
                <circle cx="4.500" cy="13" r="3.300" />
                <circle cx="23" cy="4.500" r="3.300" />
                <circle cx="23" cy="21.500" r="3.300" />
                <path d="M8 12.800Q14 11 20 6.200M8 13.200Q14 15 20 19.800" />
              </svg>
            </div>
          </div>
          <AccountCard />
          <IncomeCard />
          <div className="flex w-[156px] flex-col justify-between">
            <Lock label="System lock" />
            <Lock label="Record lock" />
          </div>
          <section className="h-[310px] flex-1 rounded-[30px] bg-[#ebebeb] px-5 pt-5">
            <div className="flex h-[59px] w-[59px] items-center justify-center rounded-full bg-white">
              <CalendarIcon />
            </div>
            <h2 className="mt-[15px] ml-[0.6px] text-[19.2px] leading-[22px] tracking-[-0.08px]">13 Days</h2>
            <p className="mt-[5px] ml-[0.6px] leading-[18px]">109 hours, 23 minutes</p>
            <div className="mt-[17px] ml-[6.4px] grid w-fit grid-cols-4 gap-x-[13.6px] gap-y-[13.7px]">
              {Array.from({ length: 8 }, (_, i) => (
                <DotBlock key={i} />
              ))}
            </div>
          </section>
        </div>
        <div className="flex gap-5 px-[30px] pt-7">
          <ProfitCard />
          <section className="h-[325px] flex-1 rounded-[30px] bg-[#ebebeb] pt-5 pr-[31.2px] pl-5">
            <div className="-mr-[1.2px] flex items-center gap-2.5">
              <h2 className="mr-auto pt-0.5 text-[19.2px] tracking-[-0.08px]">Activity manager</h2>
              <RoundButton>
                <svg width="23" height="14" viewBox="0 0 23 14" stroke="#000" strokeWidth="2.600">
                  <path d="M0 1.500h23M0 7h23M0 12.500h23" />
                </svg>
              </RoundButton>
              <RoundButton>
                <ZipIcon />
              </RoundButton>
              <RoundButton>
                <svg width="28" height="26" viewBox="0 0 28 26" fill="none" stroke="#000" strokeWidth="1.900" strokeLinejoin="round">
                  <path d="M1 1h26v2L17.500 13.500V22L11 25V13.500L1 3z" />
                </svg>
              </RoundButton>
            </div>
            <div className="mt-2.5 flex gap-5">
              <WalletCard icon={<SunIcon />} />
              <WalletCard icon={<CloudSunIcon kind="storm" />} />
              <WalletCard icon={<CloudSunIcon kind="snow" />} />
              <WalletCard icon={<CloudSunIcon kind="rain" />} />
            </div>
          </section>
        </div>
      </main>
      <div className="mt-auto">
        <Taskbar />
      </div>
    </div>
  );
}
